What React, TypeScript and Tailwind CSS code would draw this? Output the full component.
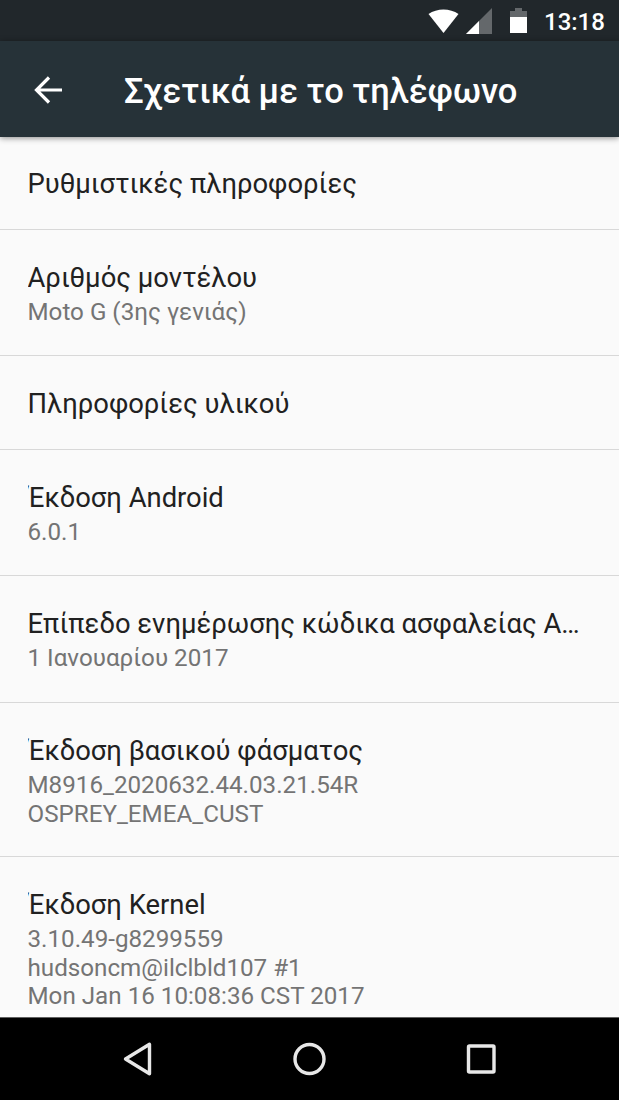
type Item = {
  title: string;
  lines?: string[];
  height: string;
};

const items: Item[] = [
  { title: "Ρυθμιστικές πληροφορίες", height: "h-[93px] pt-[29px]" },
  { title: "Αριθμός μοντέλου", lines: ["Moto G (3ης γενιάς)"], height: "h-[126px] pt-[30px]" },
  { title: "Πληροφορίες υλικού", height: "h-[94px] pt-[30px]" },
  { title: "Έκδοση Android", lines: ["6.0.1"], height: "h-[126px] pt-[30px]" },
  {
    title: "Επίπεδο ενημέρωσης κώδικα ασφαλείας Α…",
    lines: ["1 Ιανουαρίου 2017"],
    height: "h-[127px] pt-[30px]",
  },
  {
    title: "Έκδοση βασικού φάσματος",
    lines: ["M8916_2020632.44.03.21.54R", "OSPREY_EMEA_CUST"],
    height: "h-[154px] pt-[30px]",
  },
  {
    title: "Έκδοση Kernel",
    lines: ["3.10.49-g8299559", "hudsoncm@ilclbld107 #1", "Mon Jan 16 10:08:36 CST 2017"],
    height: "h-[160px] pt-[30px]",
  },
];

function StatusBar() {
  return (
    <div className="flex h-[41px] shrink-0 items-center bg-[#21272b] text-white">
      <svg className="ml-[428px] mt-px shrink-0" width="31" height="24" viewBox="0 0 31 24" fill="currentColor">
        <path d="M0.500 5C9-1 22-1 30.500 5L15.500 24Z" />
      </svg>
      <svg className="ml-[7px] mt-px shrink-0" width="26" height="26" viewBox="0 0 26 26" fill="currentColor">
        <path d="M26 0V26H0Z" opacity="0.3" />
        <path d="M13 13V26H0Z" />
      </svg>
      <svg className="ml-[18px] shrink-0" width="17" height="25" viewBox="0 0 17 25" fill="currentColor">
        <path d="M5 0h7v3h5v6H0V3h5Z" opacity="0.3" />
        <path d="M0 9h17v16H0Z" />
      </svg>
      <span className="ml-[17px] mt-0.5 text-[24px] font-medium leading-none">13:18</span>
    </div>
  );
}

function Header() {
  return (
    <header className="relative z-10 flex h-[96px] shrink-0 items-center bg-[#263238] text-white shadow-[0_1px_6px_rgba(0,0,0,0.45)]">
      <svg className="ml-[34px] mt-px shrink-0" width="28" height="28" viewBox="0 0 28 28" fill="none" stroke="currentColor" strokeWidth="3.2">
        <path d="M28 14H3M15 1.500L2.500 14L15 26.500" />
      </svg>
      <h1 className="ml-[62px] mt-[5px] whitespace-nowrap text-[34.5px] font-medium leading-none">
        Σχετικά με το τηλέφωνο
      </h1>
    </header>
  );
}

function NavBar() {
  return (
    <nav className="flex h-[83px] shrink-0 items-center border-t border-[#606060] bg-black text-[#e8e8e8]">
      <svg className="ml-[122px] shrink-0" width="31" height="38" viewBox="0 0 31 38" fill="none" stroke="currentColor" strokeWidth="3.4">
        <path d="M27.500 4.300V33.700L3.500 19Z" strokeLinejoin="round" />
      </svg>
      <svg className="ml-[139px] shrink-0" width="34" height="34" viewBox="0 0 34 34" fill="none" stroke="currentColor" strokeWidth="3.4">
        <circle cx="17.500" cy="17" r="14.500" />
      </svg>
      <svg className="ml-[140px] shrink-0" width="30" height="30" viewBox="0 0 30 30" fill="none" stroke="currentColor" strokeWidth="3.4">
        <rect x="2.500" y="2" width="25.500" height="26" rx="1" />
      </svg>
    </nav>
  );
}

export default function App() {
  return (
    <div className="flex h-[1100px] w-[619px] flex-col overflow-hidden bg-[#fafafa] font-[Roboto,sans-serif]">
      <StatusBar />
      <Header />
      <main className="h-[880px] shrink-0 overflow-hidden">
        {items.map((item) => (
          <section
            key={item.title}
            className={`border-b border-[#d8d8d8] px-[27.5px] last:border-b-0 ${item.height}`}
          >
            <h2 className="overflow-hidden whitespace-nowrap text-[27.4px] leading-[37px] text-[#212121]">
              {item.title}
            </h2>
            <div className="pt-[1.3px]">
              {item.lines?.map((line) => (
                <p key={line} className="whitespace-nowrap text-[24.2px] leading-[28.4px] text-[#747474]">
                  {line}
                </p>
              ))}
            </div>
          </section>
        ))}
      </main>
      <NavBar />
    </div>
  );
}
